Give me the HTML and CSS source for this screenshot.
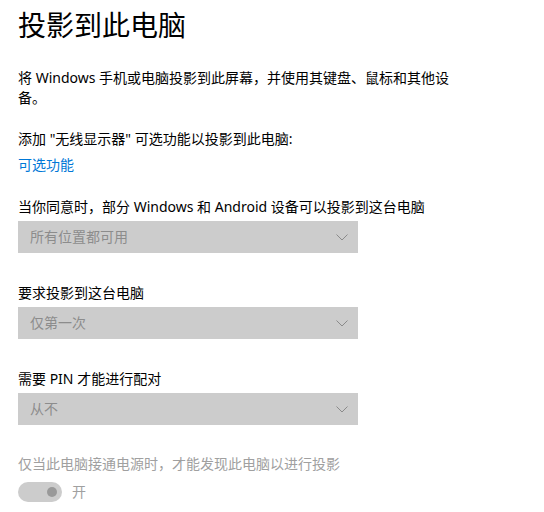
FILE: index.html
```html
<!DOCTYPE html>
<html lang="zh-CN">
<head>
    <meta charset="UTF-8">
    <meta name="viewport" content="width=device-width, initial-scale=1.0">
    <title>投影到此电脑</title>
    <link rel="stylesheet" href="styles.css">
</head>
<body>
    <div class="page">
        <h1 class="page-title">投影到此电脑</h1>

        <p class="intro">将 Windows 手机或电脑投影到此屏幕，并使用其键盘、鼠标和其他设备。</p>

        <p class="feature-note">添加 "无线显示器" 可选功能以投影到此电脑:</p>
        <a href="#" class="link">可选功能</a>

        <!-- Настройки -->
        <div class="setting first">
            <div class="setting-label">当你同意时，部分 Windows 和 Android 设备可以投影到这台电脑</div>
            <div class="dropdown">
                <span>所有位置都可用</span>
                <svg class="chevron" width="12" height="7" viewBox="0 0 12 7">
                    <path d="M0.5 0.5 L6 6 L11.5 0.5" fill="none" stroke="#8a8a8a" stroke-width="1"/>
                </svg>
            </div>
        </div>

        <div class="setting">
            <div class="setting-label">要求投影到这台电脑</div>
            <div class="dropdown">
                <span>仅第一次</span>
                <svg class="chevron" width="12" height="7" viewBox="0 0 12 7">
                    <path d="M0.5 0.5 L6 6 L11.5 0.5" fill="none" stroke="#8a8a8a" stroke-width="1"/>
                </svg>
            </div>
        </div>

        <div class="setting">
            <div class="setting-label">需要 PIN 才能进行配对</div>
            <div class="dropdown">
                <span>从不</span>
                <svg class="chevron" width="12" height="7" viewBox="0 0 12 7">
                    <path d="M0.5 0.5 L6 6 L11.5 0.5" fill="none" stroke="#8a8a8a" stroke-width="1"/>
                </svg>
            </div>
        </div>

        <div class="setting disabled">
            <div class="setting-label">仅当此电脑接通电源时，才能发现此电脑以进行投影</div>
            <div class="toggle-row">
                <div class="toggle"><div class="knob"></div></div>
                <span class="toggle-text">开</span>
            </div>
        </div>
    </div>
</body>
</html>
```

FILE: styles.css
```css
* {
    margin: 0;
    padding: 0;
    box-sizing: border-box;
}

body {
    font-family: "Noto Sans", "Noto Sans CJK SC", sans-serif;
    font-size: 14px;
    line-height: 20px;
    color: #000;
    background-color: #fff;
}

.page {
    max-width: 454px;
    padding: 5px 0 0 18px;
}

.page-title {
    font-size: 28px;
    font-weight: normal;
    line-height: 40px;
}

.intro {
    margin-top: 23px;
}

.feature-note {
    margin-top: 21px;
}

.link {
    display: block;
    margin-top: 6px;
    color: #0078d7;
    text-decoration: none;
}

/* Блоки настроек */
.setting {
    margin-top: 30px;
}

.setting.first {
    margin-top: 22px;
}

.setting-label {
    margin-bottom: 4px;
}

.dropdown {
    width: 340px;
    height: 32px;
    background-color: #cccccc;
    color: #8c8c8c;
    padding: 0 10px 0 12px;
    display: flex;
    align-items: center;
    justify-content: space-between;
}

.chevron {
    display: block;
}

.setting.disabled {
    margin-top: 29px;
}

.setting.disabled .setting-label {
    color: #a0a0a0;
    margin-bottom: 8px;
}

.toggle-row {
    display: flex;
    align-items: center;
    gap: 10px;
}

.toggle {
    width: 44px;
    height: 20px;
    border-radius: 10px;
    background-color: #cccccc;
    display: flex;
    align-items: center;
    justify-content: flex-end;
    padding-right: 5px;
}

.knob {
    width: 10px;
    height: 10px;
    border-radius: 50%;
    background-color: #999;
}

.toggle-text {
    color: #a0a0a0;
}
```
